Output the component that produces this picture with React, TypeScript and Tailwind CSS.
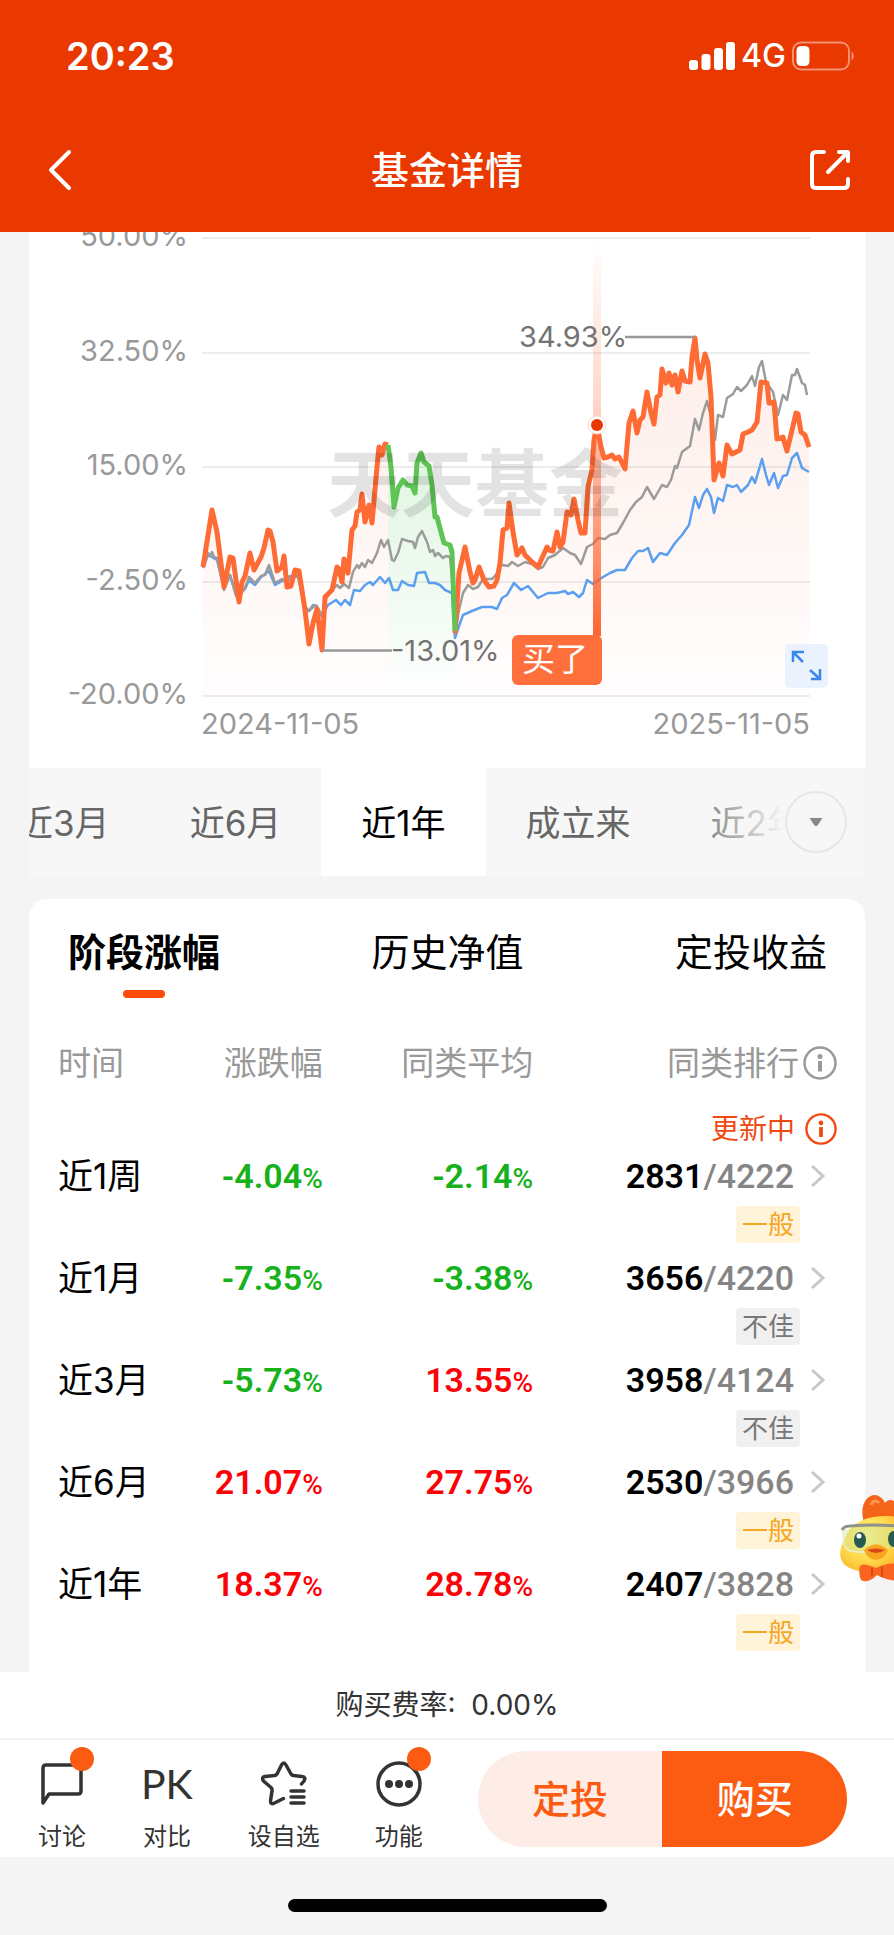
import clsx from "clsx";

type Point = [number, number];

const main: Point[] = [
  [203, 567], [212, 510], [217, 532], [224, 587], [230, 557], [233, 558], [239, 602], [242, 582], [245, 576],
  [250, 553], [254, 570], [261, 557], [264, 548], [268, 530], [270, 531], [273, 542], [277, 571], [282, 567],
  [284, 556], [287, 587], [291, 586], [295, 570], [299, 571], [305, 610], [309, 644], [313, 623], [317, 609],
  [322, 650], [325, 597], [332, 590], [337, 567], [339, 569], [342, 582], [344, 559], [348, 573], [352, 530],
  [355, 526], [357, 512], [360, 510], [362, 494], [365, 522], [369, 505], [372, 523], [377, 467], [379, 447],
  [382, 455], [385, 444], [388, 445],
];

const drop: Point[] = [
  [388, 445], [391, 467], [394, 507], [398, 488], [403, 480], [407, 485], [412, 486], [415, 493], [417, 463],
  [421, 453], [424, 462], [429, 466], [432, 485], [435, 517], [437, 517], [441, 532], [444, 543], [450, 545],
  [452, 552], [454, 607], [455, 631],
];

const recovery: Point[] = [
  [455, 633], [459, 573], [465, 547], [470, 572], [473, 583], [475, 580], [479, 567], [484, 580], [489, 587],
  [494, 586], [497, 580], [500, 563], [503, 530], [507, 528], [509, 503], [513, 532], [517, 555], [522, 548],
  [525, 555], [532, 562], [538, 567], [542, 558], [547, 547], [549, 550], [553, 551], [557, 532], [560, 547],
  [563, 542], [567, 512], [571, 515], [574, 499], [578, 520], [581, 533], [585, 533], [588, 487], [592, 470],
  [594, 440], [597, 425], [601, 447], [604, 458], [608, 457], [612, 455], [615, 459], [619, 457], [625, 469],
  [629, 423], [633, 411], [637, 433], [640, 420], [643, 417], [647, 392], [651, 413], [654, 424], [657, 397],
  [660, 395], [662, 369], [666, 383], [669, 373], [672, 385], [675, 375], [678, 392], [682, 371], [685, 381],
  [690, 382], [692, 357], [695, 338], [697, 360], [700, 378], [705, 354], [708, 363], [711, 397], [714, 480],
  [719, 463], [723, 476], [727, 445], [732, 454], [740, 450], [743, 434], [748, 432], [752, 430], [757, 422],
  [761, 382], [767, 383], [769, 403], [774, 402], [777, 439], [783, 437], [787, 451], [792, 430], [796, 413],
  [798, 414], [801, 432], [805, 435], [809, 447],
];

const average: Point[] = [
  [203, 566], [208, 553], [210, 556], [212, 552], [214, 557], [217, 558], [224, 590], [230, 575], [236, 596],
  [241, 594], [245, 588], [249, 577], [255, 583], [261, 576], [265, 575], [269, 565], [275, 583], [282, 579],
  [287, 584], [290, 577], [298, 575], [305, 607], [309, 611], [313, 605], [317, 606], [322, 617], [325, 600],
  [332, 590], [337, 585], [340, 588], [344, 584], [349, 588], [353, 572], [357, 565], [359, 568], [362, 563],
  [365, 567], [368, 560], [372, 563], [377, 553], [381, 540], [384, 547], [388, 540], [392, 560], [394, 561],
  [398, 553], [402, 539], [408, 541], [413, 542], [415, 548], [418, 537], [422, 531], [427, 542], [430, 552],
  [433, 550], [435, 556], [438, 553], [443, 558], [446, 556], [450, 557], [453, 590], [455, 634], [459, 610],
  [463, 593], [468, 585], [473, 589], [478, 587], [483, 579], [492, 579], [496, 575], [500, 566], [503, 565],
  [508, 566], [512, 562], [518, 566], [525, 562], [532, 564], [538, 569], [543, 567], [548, 558], [555, 555],
  [563, 548], [570, 553], [575, 555], [581, 564], [587, 547], [593, 544], [598, 538], [605, 539], [610, 535],
  [617, 533], [623, 523], [630, 510], [636, 502], [642, 497], [647, 487], [654, 499], [662, 485], [667, 487],
  [671, 480], [675, 466], [677, 468], [682, 452], [690, 446], [695, 419], [699, 430], [703, 413], [707, 401],
  [711, 417], [715, 440], [718, 415], [723, 417], [727, 398], [733, 394], [737, 387], [741, 391], [747, 385],
  [752, 376], [755, 386], [759, 367], [762, 361], [766, 382], [773, 392], [778, 415], [783, 395], [787, 400],
  [792, 375], [795, 375], [797, 369], [802, 383], [805, 385], [807, 395],
];

const index: Point[] = [
  [203, 568], [208, 555], [217, 560], [224, 588], [230, 575], [236, 594], [245, 589], [249, 580], [255, 585],
  [261, 577], [269, 571], [275, 585], [282, 581], [290, 576], [298, 577], [305, 607], [309, 611], [315, 605],
  [322, 615], [328, 605], [336, 600], [341, 605], [345, 600], [350, 605], [354, 590], [360, 591], [365, 585],
  [370, 582], [373, 585], [380, 577], [385, 583], [389, 578], [393, 590], [398, 590], [402, 581], [408, 585],
  [414, 586], [417, 573], [425, 572], [429, 583], [435, 583], [440, 585], [445, 590], [452, 593], [455, 638],
  [459, 626], [463, 615], [472, 611], [482, 607], [492, 607], [497, 609], [502, 598], [507, 595], [514, 583],
  [521, 590], [528, 586], [538, 598], [548, 593], [557, 593], [565, 591], [568, 594], [573, 592], [579, 597],
  [583, 593], [587, 580], [593, 584], [603, 577], [610, 573], [617, 570], [625, 570], [632, 558], [638, 551],
  [643, 551], [648, 548], [653, 562], [660, 553], [667, 555], [675, 543], [682, 535], [689, 525], [695, 497],
  [699, 508], [703, 495], [707, 489], [711, 497], [714, 513], [718, 498], [723, 501], [727, 485], [733, 487],
  [737, 485], [741, 492], [748, 485], [752, 477], [755, 483], [762, 459], [766, 475], [769, 485], [774, 473],
  [778, 488], [783, 476], [787, 475], [792, 458], [797, 453], [802, 468], [809, 472],
];

const toPoints = (data: Point[]) => data.map((p) => p.join(",")).join(" ");

const toArea = (data: Point[]) =>
  `${data[0][0]},696 ${toPoints(data)} ${data[data.length - 1][0]},696`;

const axis = [
  { label: "50.00%", y: 238 },
  { label: "32.50%", y: 353 },
  { label: "15.00%", y: 467 },
  { label: "-2.50%", y: 582 },
  { label: "-20.00%", y: 696 },
];

const ranges = ["近3月", "近6月", "近1年", "成立来", "近2年"];

const sections = ["阶段涨幅", "历史净值", "定投收益"];

const rows = [
  { time: "近1周", change: "-4.04%", avg: "-2.14%", rank: "2831", total: "4222", level: "一般" },
  { time: "近1月", change: "-7.35%", avg: "-3.38%", rank: "3656", total: "4220", level: "不佳" },
  { time: "近3月", change: "-5.73%", avg: "13.55%", rank: "3958", total: "4124", level: "不佳" },
  { time: "近6月", change: "21.07%", avg: "27.75%", rank: "2530", total: "3966", level: "一般" },
  { time: "近1年", change: "18.37%", avg: "28.78%", rank: "2407", total: "3828", level: "一般" },
];

const StatusBar = () => (
  <div className="flex h-28 items-center justify-between pl-[66px] pr-[39px]">
    <span className="text-[38px] leading-10 font-semibold">20:23</span>
    <div className="flex items-center gap-1.5">
      <svg width="46" height="30" viewBox="0 0 46 30" fill="currentColor">
        <rect x="0" y="19" width="9" height="10" rx="3" />
        <rect x="12.500" y="13" width="9" height="16" rx="3" />
        <rect x="25" y="7" width="9" height="22" rx="3" />
        <rect x="37" y="1" width="9" height="28" rx="3" />
      </svg>
      <span className="text-[32px] leading-8 font-medium">4G</span>
      <svg width="63" height="30" viewBox="0 0 63 30">
        <rect x="1" y="1.500" width="56" height="27" rx="8" fill="none" stroke="#fff" strokeOpacity="0.45" strokeWidth="2" />
        <rect x="4.500" y="5" width="13" height="20" rx="4.500" fill="#fff" />
        <path d="M59.500 10.500c3 1.500 3 7.500 0 9z" fill="#fff" fillOpacity="0.45" />
      </svg>
    </div>
  </div>
);

const Chart = () => (
  <svg className="block h-auto w-full" viewBox="29 232 836 536" role="img" aria-label="近1年业绩走势">
    <defs>
      <linearGradient id="warm" gradientUnits="userSpaceOnUse" x1="0" y1="330" x2="0" y2="696">
        <stop offset="0" stopColor="#f4683c" stopOpacity="0.12" />
        <stop offset="1" stopColor="#f4683c" stopOpacity="0.01" />
      </linearGradient>
      <linearGradient id="cool" gradientUnits="userSpaceOnUse" x1="0" y1="445" x2="0" y2="690">
        <stop offset="0" stopColor="#3cc24a" stopOpacity="0.17" />
        <stop offset="1" stopColor="#3cc24a" stopOpacity="0.01" />
      </linearGradient>
      <linearGradient id="beam" gradientUnits="userSpaceOnUse" x1="0" y1="240" x2="0" y2="636">
        <stop offset="0" stopColor="#ff6430" stopOpacity="0" />
        <stop offset="0.4" stopColor="#ff6430" stopOpacity="0.25" />
        <stop offset="0.8" stopColor="#ff6430" stopOpacity="0.7" />
        <stop offset="1" stopColor="#ff6430" />
      </linearGradient>
    </defs>

    {axis.map(({ label, y }) => (
      <g key={label}>
        <line x1="202" x2="810" y1={y} y2={y} stroke="#ececec" strokeWidth="2" />
        <text x="188" y={y + 8} textAnchor="end" fontSize="29" fill="#999">
          {label}
        </text>
      </g>
    ))}

    <polygon points={toArea(main)} fill="url(#warm)" />
    <polygon points={toArea(drop)} fill="url(#cool)" />
    <polygon points={toArea(recovery)} fill="url(#warm)" />

    <g fill="none" strokeLinejoin="round">
      <polyline points={toPoints(index)} stroke="#5b9ff0" strokeWidth="2.500" />
      <polyline points={toPoints(average)} stroke="#9b9b9b" strokeWidth="2.500" />
      <polyline points={toPoints(main)} stroke="#ff6b35" strokeWidth="5" />
      <polyline points={toPoints(recovery)} stroke="#ff6b35" strokeWidth="5" />
      <polyline points={toPoints(drop)} stroke="#5fc455" strokeWidth="5" />
    </g>

    <rect x="593" y="240" width="8" height="396" fill="url(#beam)" />
    <text x="327" y="511" fontSize="74" fontWeight="700" fill="#000" fillOpacity="0.11">
      天天基金
    </text>
    <circle cx="597" cy="425" r="9" fill="#fff" stroke="#fbd9cc" strokeWidth="1" />
    <circle cx="597" cy="425" r="6" fill="#e83a00" />

    <path d="M322 650.500H392M625 337H695" stroke="#999" strokeWidth="2.500" />
    <text x="391" y="661" fontSize="29" fill="#737373">-13.01%</text>
    <text x="519" y="347" fontSize="29" fill="#737373">34.93%</text>

    <rect x="512" y="635" width="90" height="50" rx="6" fill="#ff6f3c" />
    <text x="555" y="671" textAnchor="middle" fontSize="33" fill="#fff">买了</text>

    <rect x="785" y="644" width="43" height="44" rx="5" fill="#eaf2fd" />
    <path
      d="M793 662V652H804M793.500 652.500L803 662M811 679H820V669M819.500 678.500L810 670"
      fill="none"
      stroke="#3b87f0"
      strokeWidth="2.500"
    />

    <text x="201" y="734" fontSize="29" fill="#999">2024-11-05</text>
    <text x="810" y="734" textAnchor="end" fontSize="29" fill="#999">2025-11-05</text>
  </svg>
);

const RangeTabs = () => (
  <div className="relative h-27 overflow-hidden bg-[#f7f7f7]">
    <div className="-ml-[51px] flex h-full">
      {ranges.map((text) => (
        <button
          key={text}
          className={clsx(
            "shrink-0 px-10 pt-0.5 text-[35px] leading-10",
            text === "近1年" ? "bg-white text-black" : "text-[#666]"
          )}
        >
          {text}
        </button>
      ))}
    </div>
    <div className="absolute inset-y-0 right-0 flex w-[180px] items-center justify-end bg-gradient-to-r from-transparent to-[#f7f7f7] to-55% pr-[18px]">
      <button
        aria-label="更多区间"
        className="flex size-[62px] items-center justify-center rounded-full border-2 border-[#e6e6e6]"
      >
        <svg width="16" height="10" viewBox="0 0 16 10">
          <path d="M1.500 1H14.500L9.500 8.500Q8 9.500 6.500 8.500Z" fill="#888" />
        </svg>
      </button>
    </div>
  </div>
);

const InfoIcon = ({ size }: { size: number }) => (
  <svg width={size} height={size} viewBox="0 0 34 34" fill="none" stroke="currentColor">
    <circle cx="17" cy="17" r="15.500" strokeWidth="2.500" />
    <circle cx="17" cy="10.500" r="2.500" fill="currentColor" stroke="none" />
    <path d="M17 15V25.500" strokeWidth="4" />
  </svg>
);

const Percent = ({ value }: { value: string }) => (
  <td
    className={clsx(
      "text-right font-[Roboto,sans-serif] text-[34px] leading-10 font-semibold",
      value.startsWith("-") ? "text-[#17b11b]" : "text-[#fb0207]"
    )}
  >
    {value.replace("%", "")}
    <span className="text-[28px] font-medium">%</span>
  </td>
);

const StageTable = () => (
  <table className="w-full table-fixed">
    <thead>
      <tr className="h-[78px] text-[33px] leading-10 text-[#999]">
        <th className="w-[15%] text-left font-normal">时间</th>
        <th className="w-[19%] text-right font-normal">涨跌幅</th>
        <th className="w-[27%] text-right font-normal">同类平均</th>
        <th className="w-[39%] font-normal">
          <div className="flex items-center justify-end gap-1">
            同类排行
            <InfoIcon size={34} />
          </div>
        </th>
      </tr>
    </thead>
    <tbody>
      <tr className="h-[54px]">
        <td colSpan={4}>
          <div className="flex items-center justify-end gap-2.5 text-[28px] leading-8 text-[#f04a12]">
            更新中
            <InfoIcon size={32} />
          </div>
        </td>
      </tr>
      {rows.map((row) => (
        <tr key={row.time} className="h-[102px] align-top">
          <td className="text-[35px] leading-10 text-black">{row.time}</td>
          <Percent value={row.change} />
          <Percent value={row.avg} />
          <td>
            <a href="#rank" className="flex items-center justify-end gap-4 pr-3">
              <span className="font-[Roboto,sans-serif] text-[34px] leading-10 font-medium text-[#858585]">
                <b className="font-semibold text-black">{row.rank}</b>/{row.total}
              </span>
              <svg width="15" height="24" viewBox="0 0 15 24" fill="none" stroke="#c8c8c8" strokeWidth="3">
                <path d="M2 2L13 12L2 22" />
              </svg>
            </a>
            <div className="mt-2.5 flex justify-end pr-[37px]">
              <span
                className={clsx(
                  "rounded px-1.5 text-[26px] leading-[37px]",
                  row.level === "一般" ? "bg-[#fff3d9] text-[#f5a623]" : "bg-[#f0f0f0] text-[#777]"
                )}
              >
                {row.level}
              </span>
            </div>
          </td>
        </tr>
      ))}
    </tbody>
  </table>
);

const Chick = () => (
  <svg width="56" height="92" viewBox="0 0 56 92">
    <defs>
      <radialGradient id="face" cx="0.45" cy="0.35" r="0.7">
        <stop offset="0" stopColor="#fff08a" />
        <stop offset="0.6" stopColor="#ffd94a" />
        <stop offset="1" stopColor="#fdb52c" />
      </radialGradient>
    </defs>
    <path d="M26 29C21 14 28 2 37 2C44 3 46 8 47 10C51 5 56 7 60 12V30Z" fill="#f4651a" />
    <path d="M33 12C35 7 39 7 41 10" stroke="#ff9550" strokeWidth="3" fill="none" />
    <path d="M60 24C34 20 12 28 7 45C-2 62 2 73 17 77C30 82 48 81 60 78Z" fill="url(#face)" />
    <path d="M5 37Q5 57 13 58Q30 62 44 57Q50 53 60 57V34Q30 30 5 37Z" fill="#c9e9a0" fillOpacity="0.4" />
    <path d="M4 37Q6 33 12 33Q36 31 60 33" stroke="#8d938c" strokeWidth="3" fill="none" />
    <path d="M5 38Q4 56 13 58Q28 61 44 57" stroke="#e9efd8" strokeWidth="1.500" fill="none" />
    <ellipse cx="22" cy="47" rx="6" ry="8" fill="#275a50" />
    <circle cx="21" cy="43" r="2.500" fill="#fff" />
    <ellipse cx="56" cy="46" rx="6" ry="8" fill="#275a50" />
    <path d="M26 57Q38 46 50 57Q47 66 38 67Q29 66 26 57Z" fill="#f9a51d" />
    <path d="M29 57Q38 54 47 57Q38 63 29 57Z" fill="#d9481c" />
    <path d="M22 73Q25 69 38 75Q50 69 60 71V88Q48 87 39 82Q30 91 23 87Q20 80 22 73Z" fill="#fb6420" />
    <path d="M34 75V83M44 74V84" stroke="#d94a10" strokeWidth="2" />
  </svg>
);

const BottomBar = () => (
  <nav className="flex h-[117px] items-center justify-between pr-[47px] pl-[38px] text-2xl leading-8 text-[#333]">
    <div className="flex items-end gap-[55px] pt-3.5">
      <button className="relative flex flex-col items-center gap-3">
        <svg width="42" height="50" viewBox="0 0 42 50" fill="none" stroke="#333" strokeWidth="3.500" strokeLinejoin="round">
          <path d="M2 44V9Q2 6 5 6H37Q40 6 40 9V32Q40 35 37 35H8Z" />
        </svg>
        讨论
        <i className="absolute -top-3 -right-2 size-6 rounded-full bg-[#fc5b12]" />
      </button>
      <button className="flex flex-col items-center gap-3">
        <span className="font-[Lato,sans-serif] text-[41px] leading-[50px]">PK</span>
        对比
      </button>
      <button className="flex flex-col items-center gap-3">
        <svg width="46" height="50" viewBox="0 -2 46 50" fill="none" stroke="#333" strokeWidth="3.500" strokeLinecap="round" strokeLinejoin="round">
          <path d="M40.500 23L43 20Q45.500 16 41 15.500L32.500 14.500Q31 14.500 30 13L25 4Q22.700 0 20.500 4L16 13Q15 14.500 13.500 14.500L4 15.500Q0 16 2.500 20L10 26.500Q11.500 28 11 30L9.500 40Q9.500 44 13.500 42L22.500 37.500" />
          <path d="M30 30H43M30 36H43M30 42H43" />
        </svg>
        设自选
      </button>
      <button className="relative flex flex-col items-center gap-3">
        <svg width="46" height="50" viewBox="0 -2 46 50" fill="#333">
          <circle cx="23" cy="23" r="21" fill="none" stroke="#333" strokeWidth="3.500" />
          <circle cx="13" cy="23" r="4" />
          <circle cx="23" cy="23" r="4" />
          <circle cx="33" cy="23" r="4" />
        </svg>
        功能
        <i className="absolute -top-3 -right-2 size-6 rounded-full bg-[#fc5b12]" />
      </button>
    </div>
    <div className="ml-[55px] flex h-24 flex-1 overflow-hidden rounded-full text-[38px] leading-10 font-medium">
      <button className="flex-1 bg-[#fdede6] text-[#fc5b12]">定投</button>
      <button className="flex-1 bg-[#fc5b12] text-white">购买</button>
    </div>
  </nav>
);

const App = () => {
  return (
    <div className="relative bg-[#f4f4f4] font-[Inter,'Noto_Sans_CJK_SC',sans-serif]">
      <header className="bg-[#e93800] text-white">
        <StatusBar />
        <div className="grid h-30 grid-cols-3 items-center px-11 pb-1">
          <button aria-label="返回" className="justify-self-start pl-1">
            <svg width="24" height="42" viewBox="0 0 24 42" fill="none" stroke="currentColor" strokeWidth="4" strokeLinecap="round" strokeLinejoin="round">
              <path d="M21 3L3 21L21 39" />
            </svg>
          </button>
          <h1 className="text-center text-[38px] leading-12 font-medium">基金详情</h1>
          <button aria-label="分享" className="justify-self-end">
            <svg width="40" height="42" viewBox="0 0 40 42" fill="none" stroke="currentColor" strokeWidth="4" strokeLinecap="round" strokeLinejoin="round">
              <path d="M14 3H6Q2 3 2 7V35Q2 39 6 39H34Q38 39 38 35V30" />
              <path d="M29 3H38V12M37 4L18 23" />
            </svg>
          </button>
        </div>
      </header>

      <main className="px-[29px]">
        <section className="bg-white">
          <Chart />
          <RangeTabs />
        </section>
        <section className="mt-[23px] rounded-t-[18px] bg-white pr-7 pb-1.5 pl-[29px]">
          <div className="flex justify-between px-2.5 pt-[29px] pb-[26px]">
            {sections.map((text, i) => (
              <button
                key={text}
                className={clsx(
                  "flex flex-col items-center gap-3.5 text-[38px] leading-12 text-black",
                  i === 0 && "font-bold"
                )}
              >
                {text}
                {i === 0 && <i className="h-2 w-[42px] rounded-full bg-[#fc4a08]" />}
              </button>
            ))}
          </div>
          <StageTable />
        </section>
      </main>

      <footer>
        <div className="bg-white">
          <p className="border-b-2 border-[#f2f2f2] text-center text-[28px] leading-[66px] text-[#333]">
            购买费率:&nbsp; 0.00%
          </p>
          <BottomBar />
        </div>
        <div className="flex justify-center pt-[42px] pb-[23px]">
          <div className="h-[13px] w-[319px] rounded-full bg-black" />
        </div>
      </footer>

      <button aria-label="小助手" className="absolute right-0 bottom-[350px]">
        <Chick />
      </button>
    </div>
  );
};

export default App;
